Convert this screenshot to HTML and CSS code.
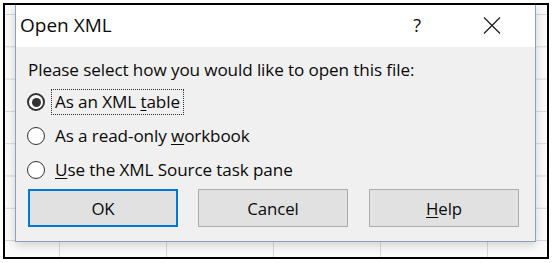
FILE: index.html
```html
<!DOCTYPE html>
<html>
<head>
<meta charset="utf-8">
<link rel="stylesheet" href="styles.css">
</head>
<body>
<div class="frame">
  <div class="dialog">
    <div class="titlebar">
      <span class="title">Open XML</span>
      <span class="help-q">?</span>
      <svg class="close" width="18" height="17" viewBox="0 0 18 17"><path d="M1 0.5 L17 16.5 M17 0.5 L1 16.5" stroke="#1a1a1a" stroke-width="1.2" fill="none"/></svg>
    </div>
    <div class="body">
      <div class="prompt">Please select how you would like to open this file:</div>
      <div class="opt">
        <span class="radio checked"></span>
        <span class="label focus">As an XML <u>t</u>able</span>
      </div>
      <div class="opt">
        <span class="radio"></span>
        <span class="label">As a read-only <u>w</u>orkbook</span>
      </div>
      <div class="opt">
        <span class="radio"></span>
        <span class="label"><u>U</u>se the XML Source task pane</span>
      </div>
      <div class="buttons">
        <div class="btn default">OK</div>
        <div class="btn">Cancel</div>
        <div class="btn"><u>H</u>elp</div>
      </div>
    </div>
  </div>
</div>
</body>
</html>
```
FILE: styles.css
```css
html, body {
  margin: 0;
  padding: 0;
  background: #ffffff;
}
body {
  width: 554px;
  height: 263px;
  overflow: hidden;
  font-family: "Open Sans", "Noto Sans", sans-serif;
}
.frame {
  margin: 3px 0 0 3px;
  width: 542px;
  height: 252px;
  border: 2px solid #000;
  overflow: hidden;
  background-color: #fbfbfb;
  background-image:
    linear-gradient(to right, #d9d9d9 1px, transparent 1px),
    linear-gradient(to bottom, #d9d9d9 1px, transparent 1px);
  background-size: 107px 100%, 100% 32.3px;
  background-position: 54px 0, 0 9px;
}
.dialog {
  margin-left: 10px;
  width: 519px;
  border: 1px solid #8aa2bf;
  border-top: none;
  box-shadow: 0 3px 10px rgba(0,0,0,0.18);
  background: #f0f0f0;
}
.titlebar {
  height: 42px;
  background: #fff;
  display: flex;
  align-items: center;
  color: #0a0a0a;
}
.title {
  font-size: 19px;
  margin-left: 4px;
  flex: 1;
  padding-bottom: 2px;
}
.help-q {
  font-size: 18px;
  margin-right: 62px;
  padding-bottom: 2px;
}
.close {
  flex: none;
  margin-right: 34px;
  margin-bottom: 2px;
}
.body {
  height: 194px;
  box-sizing: border-box;
  padding: 8px 16px 0 12px;
  color: #0a0a0a;
  font-size: 17.1px;
  letter-spacing: -0.1px;
}
.prompt {
  height: 30px;
  line-height: 30px;
  white-space: nowrap;
}
.opt {
  height: 34px;
  display: flex;
  align-items: center;
}
.radio {
  flex: none;
  box-sizing: border-box;
  width: 18px;
  height: 18px;
  border: 1px solid #333;
  border-radius: 50%;
  background: #fff;
  margin-left: -1px;
  margin-right: 6px;
  display: flex;
  align-items: center;
  justify-content: center;
}
.radio.checked {
  border: 2px solid #333;
}
.radio.checked::after {
  content: "";
  width: 9px;
  height: 9px;
  border-radius: 50%;
  background: #333;
}
.label {
  border: 1px dotted transparent;
  padding: 0 3px;
  line-height: 24px;
  white-space: nowrap;
}
.label.focus {
  border-color: #333;
}
u {
  text-decoration-thickness: 1px;
  text-underline-offset: 2px;
}
.buttons {
  margin-top: 2px;
  display: flex;
  gap: 20px;
}
.btn {
  flex: none;
  box-sizing: border-box;
  width: 150px;
  height: 38px;
  background: #e1e1e1;
  border: 1px solid #adadad;
  display: flex;
  align-items: center;
  justify-content: center;
  font-size: 16.8px;
}
.btn.default {
  border: 2px solid #0078d7;
}
.buttons .btn:last-child {
  margin-left: 1px;
}
```
